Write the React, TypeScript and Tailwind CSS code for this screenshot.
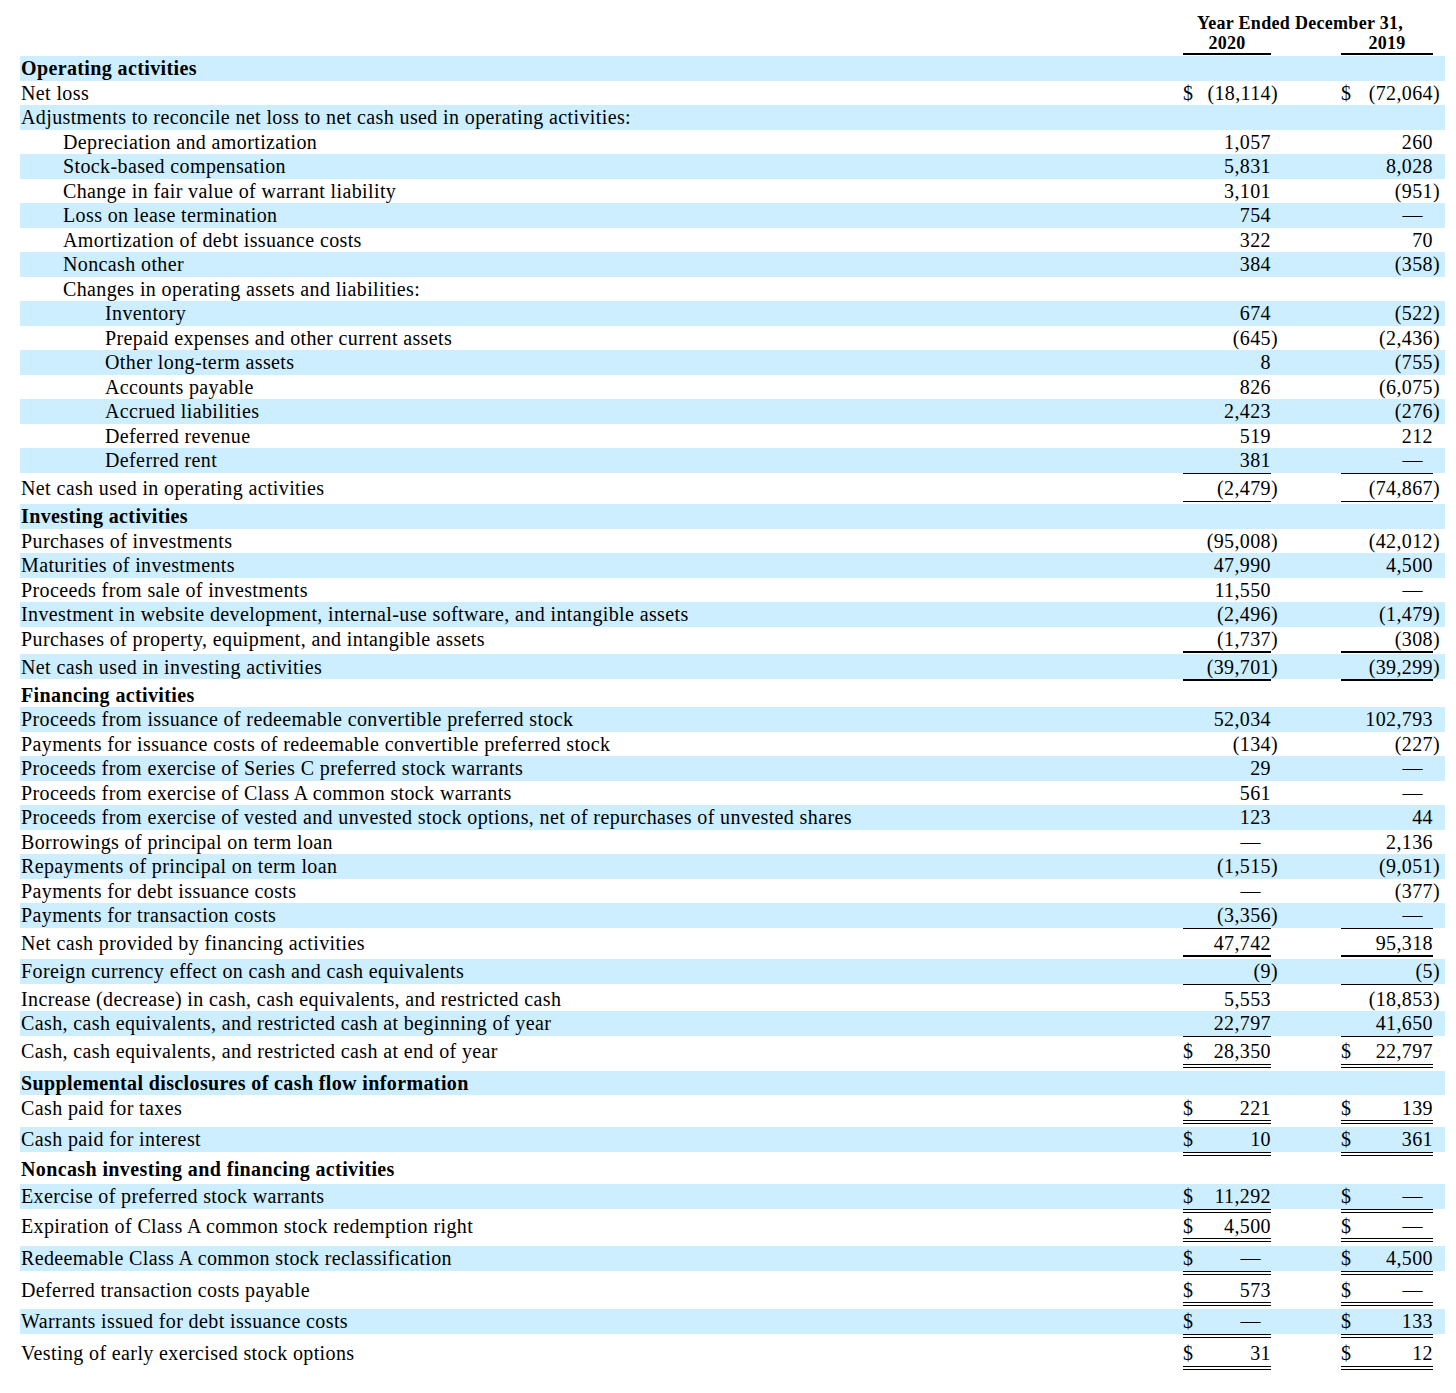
import React from "react";

type Line = "none" | "single" | "double";
type Row = {
  l: string;
  i?: number;
  b?: boolean;
  s?: boolean;
  a?: string;
  c?: string;
  d?: boolean;
  h?: number;
  line?: Line;
  g?: number;
};

const rows: Row[] = [
  { l: "Operating activities", b: true, s: true },
  { l: "Net loss", a: "(18,114)", c: "(72,064)", d: true },
  { l: "Adjustments to reconcile net loss to net cash used in operating activities:", s: true },
  { l: "Depreciation and amortization", i: 1, a: "1,057", c: "260" },
  { l: "Stock-based compensation", i: 1, s: true, a: "5,831", c: "8,028" },
  { l: "Change in fair value of warrant liability", i: 1, a: "3,101", c: "(951)" },
  { l: "Loss on lease termination", i: 1, s: true, a: "754", c: "—" },
  { l: "Amortization of debt issuance costs", i: 1, a: "322", c: "70" },
  { l: "Noncash other", i: 1, s: true, a: "384", c: "(358)" },
  { l: "Changes in operating assets and liabilities:", i: 1 },
  { l: "Inventory", i: 2, s: true, a: "674", c: "(522)" },
  { l: "Prepaid expenses and other current assets", i: 2, a: "(645)", c: "(2,436)" },
  { l: "Other long-term assets", i: 2, s: true, a: "8", c: "(755)" },
  { l: "Accounts payable", i: 2, a: "826", c: "(6,075)" },
  { l: "Accrued liabilities", i: 2, s: true, a: "2,423", c: "(276)" },
  { l: "Deferred revenue", i: 2, a: "519", c: "212" },
  { l: "Deferred rent", i: 2, s: true, a: "381", c: "—", line: "single", g: 3 },
  { l: "Net cash used in operating activities", a: "(2,479)", c: "(74,867)", h: 25, line: "single", g: 3.5 },
  { l: "Investing activities", b: true, s: true },
  { l: "Purchases of investments", a: "(95,008)", c: "(42,012)" },
  { l: "Maturities of investments", s: true, a: "47,990", c: "4,500" },
  { l: "Proceeds from sale of investments", a: "11,550", c: "—" },
  { l: "Investment in website development, internal-use software, and intangible assets", s: true, a: "(2,496)", c: "(1,479)" },
  { l: "Purchases of property, equipment, and intangible assets", a: "(1,737)", c: "(308)", line: "single", g: 3 },
  { l: "Net cash used in investing activities", s: true, a: "(39,701)", c: "(39,299)", h: 25, line: "single", g: 3.5 },
  { l: "Financing activities", b: true },
  { l: "Proceeds from issuance of redeemable convertible preferred stock", s: true, a: "52,034", c: "102,793" },
  { l: "Payments for issuance costs of redeemable convertible preferred stock", a: "(134)", c: "(227)" },
  { l: "Proceeds from exercise of Series C preferred stock warrants", s: true, a: "29", c: "—" },
  { l: "Proceeds from exercise of Class A common stock warrants", a: "561", c: "—" },
  { l: "Proceeds from exercise of vested and unvested stock options, net of repurchases of unvested shares", s: true, a: "123", c: "44" },
  { l: "Borrowings of principal on term loan", a: "—", c: "2,136" },
  { l: "Repayments of principal on term loan", s: true, a: "(1,515)", c: "(9,051)" },
  { l: "Payments for debt issuance costs", a: "—", c: "(377)" },
  { l: "Payments for transaction costs", s: true, a: "(3,356)", c: "—", line: "single", g: 2.5 },
  { l: "Net cash provided by financing activities", a: "47,742", c: "95,318", h: 25, line: "single", g: 4 },
  { l: "Foreign currency effect on cash and cash equivalents", s: true, a: "(9)", c: "(5)", line: "single", g: 3 },
  { l: "Increase (decrease) in cash, cash equivalents, and restricted cash", a: "5,553", c: "(18,853)" },
  { l: "Cash, cash equivalents, and restricted cash at beginning of year", s: true, a: "22,797", c: "41,650", line: "single", g: 3 },
  { l: "Cash, cash equivalents, and restricted cash at end of year", a: "28,350", c: "22,797", d: true, h: 25, line: "double", g: 7 },
  { l: "Supplemental disclosures of cash flow information", b: true, s: true },
  { l: "Cash paid for taxes", a: "221", c: "139", d: true, h: 25, line: "double", g: 7 },
  { l: "Cash paid for interest", s: true, a: "10", c: "361", d: true, line: "double", g: 5.5 },
  { l: "Noncash investing and financing activities", b: true, g: 2.5 },
  { l: "Exercise of preferred stock warrants", s: true, a: "11,292", c: "—", d: true, line: "double", g: 5 },
  { l: "Expiration of Class A common stock redemption right", a: "4,500", c: "—", d: true, line: "double", g: 8 },
  { l: "Redeemable Class A common stock reclassification", s: true, a: "—", c: "4,500", d: true, line: "double", g: 7 },
  { l: "Deferred transaction costs payable", a: "573", c: "—", d: true, line: "double", g: 7 },
  { l: "Warrants issued for debt issuance costs", s: true, a: "—", c: "133", d: true, line: "double", g: 7 },
  { l: "Vesting of early exercised stock options", a: "31", c: "12", d: true, h: 25, line: "double", g: 5 },
];

function Val({ v, d, w }: { v?: string; d?: boolean; w: string }) {
  if (!v) return <><div className={w} /><div className="w-[8px]" /></>;
  const neg = v.endsWith(")");
  const body = neg ? v.slice(0, -1) : v;
  const dash = v === "—";
  return (
    <>
      <div className={`${w} flex justify-between whitespace-nowrap`}>
        <span>{d ? "$" : ""}</span>
        <span className={dash ? "pr-[10px]" : ""}>{body}</span>
      </div>
      <div className="w-[8px]">{neg ? ")" : ""}</div>
    </>
  );
}

function Under({ line, w }: { line?: Line; w: string }) {
  return (
    <div className={w}>
      {line === "single" && <div className="h-[1.5px] bg-black" />}
      {line === "double" && <div className="h-[4px] border-y-[1.5px] border-black" />}
    </div>
  );
}

export default function App() {
  return (
    <div
      className="bg-white text-black pl-[20px] pr-[11px] pt-[13px] pb-[20px] w-[1456px]"
      style={{ fontFamily: '"Liberation Serif", "Times New Roman", serif' }}
    >
      <div className="flex text-[18px] tracking-[0.3px] font-bold leading-[20px]">
        <div className="flex-1" />
        <div className="w-[270px] text-center pr-[12px] whitespace-nowrap">Year Ended December 31,</div>
        <div className="w-[4px]" />
      </div>
      <div className="flex text-[18px] tracking-[0.3px] font-bold leading-[20px]">
        <div className="flex-1" />
        <div className="w-[88px] text-center">2020</div>
        <div className="w-[8px]" />
        <div className="w-[62px]" />
        <div className="w-[92px] text-center">2019</div>
        <div className="w-[8px]" />
        <div className="w-[4px]" />
      </div>
      <div className="flex h-[3px]">
        <div className="flex-1" />
        <div className="w-[88px] h-[2px] bg-black" />
        <div className="w-[8px]" />
        <div className="w-[62px]" />
        <div className="w-[92px] h-[2px] bg-black" />
        <div className="w-[12px]" />
      </div>
      {rows.map((r, idx) => (
        <div key={idx}>
          <div
            className={`flex items-center text-[20px] tracking-[0.38px] leading-[22px] ${r.s ? "bg-[#cceeff]" : ""} ${r.b ? "font-bold" : ""}`}
            style={{ height: r.h ?? 24.5 }}
          >
            <div
              className={`flex-1 whitespace-nowrap pl-[1px] ${r.i === 1 ? "pl-[43px]" : ""} ${r.i === 2 ? "pl-[85px]" : ""}`}
            >
              {r.l}
            </div>
            <Val v={r.a} d={r.d} w="w-[88px]" />
            <div className="w-[62px]" />
            <Val v={r.c} d={r.d} w="w-[92px]" />
            <div className="w-[4px]" />
          </div>
          {r.g ? (
            <div className="flex" style={{ height: r.g }}>
              <div className="flex-1" />
              <Under line={r.line} w="w-[88px]" />
              <div className="w-[8px]" />
              <div className="w-[62px]" />
              <Under line={r.line} w="w-[92px]" />
              <div className="w-[12px]" />
            </div>
          ) : null}
        </div>
      ))}
    </div>
  );
}
